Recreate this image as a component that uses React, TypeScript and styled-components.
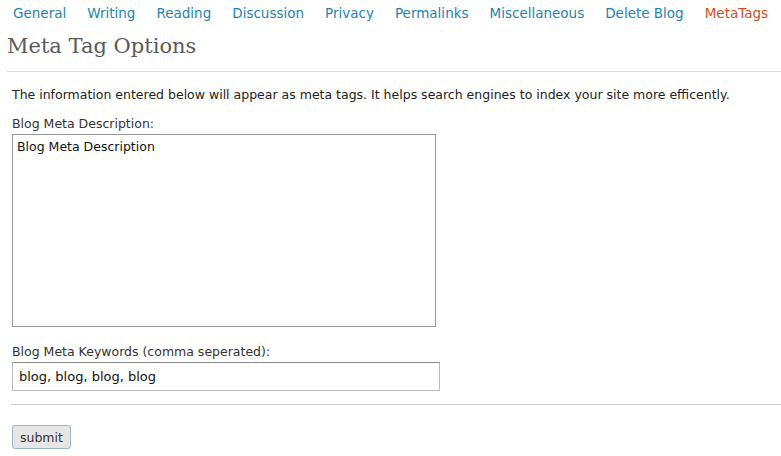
import { FC } from "react";
import styled, { createGlobalStyle } from "styled-components";

const tabs = [
  "General",
  "Writing",
  "Reading",
  "Discussion",
  "Privacy",
  "Permalinks",
  "Miscellaneous",
  "Delete Blog",
  "MetaTags",
];

const App: FC = () => {
  return (
    <Page>
      <GlobalStyle />
      <Tabs>
        {tabs.map((t) => (
          <Tab key={t} active={t === "MetaTags"}>
            {t}
          </Tab>
        ))}
      </Tabs>
      <Title>Meta Tag Options</Title>
      <Form>
        <Intro>
          The information entered below will appear as meta tags. It helps
          search engines to index your site more efficently.
        </Intro>
        <Label>Blog Meta Description:</Label>
        <TextArea defaultValue="Blog Meta Description" />
        <Label>Blog Meta Keywords (comma seperated):</Label>
        <TextInput defaultValue="blog, blog, blog, blog" />
      </Form>
      <Rule />
      <Submit>submit</Submit>
    </Page>
  );
};

export default App;

const GlobalStyle = createGlobalStyle({
  body: {
    margin: 0,
    background: "#fff",
    fontFamily: '"DejaVu Sans", Verdana, sans-serif',
    color: "#333",
  },
});

const Page = styled.div({
  width: "781px",
  height: "456px",
  overflow: "hidden",
  boxSizing: "border-box",
  paddingLeft: "7px",
});
const Tabs = styled.div({
  display: "flex",
  gap: "21px",
  paddingLeft: "6px",
  paddingTop: "2px",
  height: "22px",
  alignItems: "center",
});
const Tab = styled.a<{ active: boolean }>(({ active }) => ({
  fontSize: "13.5px",
  color: active ? "#d54e21" : "#2583ad",
  whiteSpace: "nowrap",
  cursor: "pointer",
}));
const Title = styled.h2({
  margin: 0,
  padding: "10px 0 13px",
  fontFamily: 'Georgia, "DejaVu Serif", "Liberation Serif", serif',
  fontWeight: "normal",
  fontSize: "21px",
  color: "#5a5a5a",
  borderBottom: "1px solid #dadada",
});
const Form = styled.div({
  display: "flex",
  flexDirection: "column",
  alignItems: "flex-start",
  paddingLeft: "5px",
});
const Intro = styled.p({
  margin: "15px 0 14px",
  fontSize: "12.5px",
  color: "#222",
});
const Label = styled.div({
  fontSize: "12.5px",
  color: "#333",
  marginBottom: "3px",
});
const TextArea = styled.textarea({
  width: "424px",
  height: "193px",
  boxSizing: "border-box",
  border: "1px solid #999",
  padding: "4px 4px",
  fontFamily: "inherit",
  fontSize: "12.5px",
  color: "#111",
  resize: "none",
  marginBottom: "17px",
});
const TextInput = styled.input({
  width: "428px",
  height: "29px",
  boxSizing: "border-box",
  border: "1px solid #bbb",
  borderTopColor: "#888",
  padding: "2px 6px",
  fontFamily: "inherit",
  fontSize: "13px",
  color: "#111",
});
const Rule = styled.div({
  marginTop: "13px",
  marginLeft: "4px",
  borderTop: "1px solid #ccc",
});
const Submit = styled.button({
  marginTop: "20px",
  marginLeft: "5px",
  height: "24px",
  padding: "0 7px",
  background: "#e6e6e6",
  border: "1px solid #9bb5c8",
  borderRadius: "3px",
  fontFamily: "inherit",
  fontSize: "12.5px",
  color: "#333",
});
